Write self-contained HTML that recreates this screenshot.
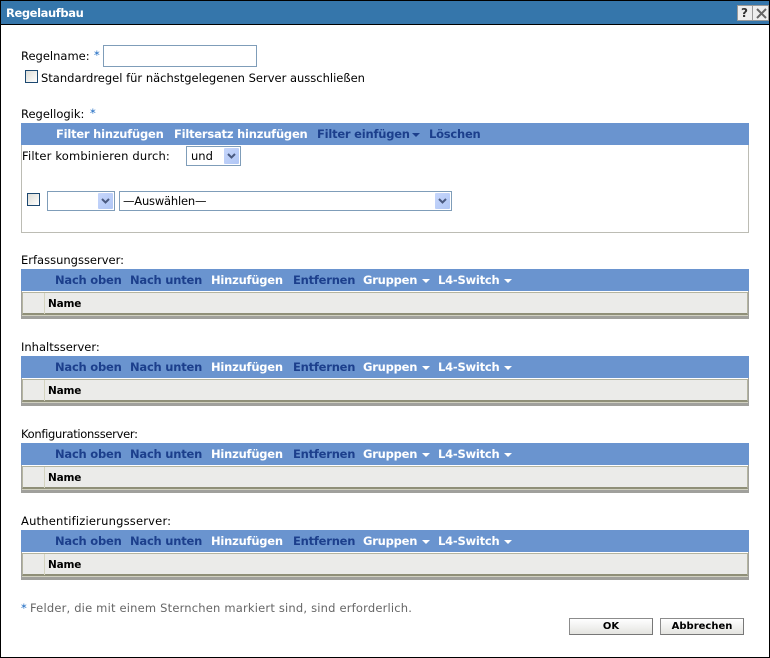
<!DOCTYPE html>
<html lang="de">
<head>
<meta charset="utf-8">
<title>Regelaufbau</title>
<style>
html,body{margin:0;padding:0;background:#fff}
#p{position:relative;width:770px;height:658px;overflow:hidden;background:#fff;font-family:"DejaVu Sans","Liberation Sans",sans-serif;font-size:11.5px;color:#000}
#p div,#p span.t{position:absolute;box-sizing:border-box}
.t{white-space:nowrap;line-height:14px}
.b{font-weight:bold;font-size:11.5px;letter-spacing:-.22px}
.w{color:#fff}
.n{color:#1c3f8c}
.s{color:#1565c0}
.tb{background:#6a94cf;height:22px;left:21px;width:728px}
.inp{background:#fff;border:1px solid #7f9db9}
.cb{width:13px;height:13px;border:1px solid #1c4870;background:linear-gradient(135deg,#dcdcd6,#fff)}
.arr{width:15px;height:16px;background:linear-gradient(135deg,#c6d6fb,#b0c6f5);border-radius:1px}
.bt{background:linear-gradient(#fff,#e4e4e0);border:1px solid #8c8c8c;border-right-color:#777;border-bottom-color:#777;height:17px;text-align:center;font-weight:bold;font-size:10px;line-height:15px}
.o{left:21px;width:728px;height:28px;background:#a0a09c}
.l{left:22px;width:726px;height:1px;background:#fff}
.h{left:22px;width:726px;height:23px;background:#ebebe9;border:1px solid #b4b4a0;border-bottom:2px solid #8f8f78;box-shadow:0 1px 0 #d0d0c0}
.c{left:44px;width:1px;height:21px;background:#d4d4c0}
.nm{font-weight:bold;font-size:10.500px;letter-spacing:-.2px}
svg{position:absolute}
</style>
</head>
<body>
<div id="p">
<div style="left:0;top:0;width:770px;height:658px;border:1px solid #000"></div>
<div style="left:1px;top:1px;width:768px;height:23px;background:#3576ab"></div>
<div style="left:1px;top:24px;width:768px;height:1px;background:#000"></div>
<span class="t w" style="left:6px;top:6px;font-weight:bold;font-size:11.5px;letter-spacing:-.4px">Regelaufbau</span>
<div style="left:737px;top:5px;width:32px;height:16px;background:#eee;border:1px solid #999"></div>
<div style="left:752px;top:5px;width:1px;height:16px;background:#999"></div>
<span class="t" style="left:741px;top:6px;font-weight:bold;font-size:12px;color:#333">?</span>
<svg style="left:756px;top:8px" width="11" height="11" viewBox="0 0 11 11"><path d="M1 1L10 10M10 1L1 10" stroke="#666" stroke-width="2"/></svg>

<span class="t" style="left:21px;top:49px">Regelname:</span>
<span class="t s" style="left:94px;top:48px">*</span>
<div class="inp" style="left:103px;top:45px;width:154px;height:22px"></div>
<div class="cb" style="left:25px;top:70px"></div>
<span class="t" style="left:41px;top:71px">Standardregel für nächstgelegenen Server ausschließen</span>

<span class="t" style="left:21px;top:107px">Regellogik:</span>
<span class="t s" style="left:90px;top:106px">*</span>
<div style="left:21px;top:123px;width:728px;height:110px;border:1px solid #bcbcb4;border-top:0"></div>
<div class="tb" style="top:123px"></div>
<span class="t b w" style="left:56px;top:127px">Filter hinzufügen</span>
<span class="t b w" style="left:174px;top:127px">Filtersatz hinzufügen</span>
<span class="t b n" style="left:317px;top:127px">Filter einfügen</span>
<svg style="left:412px;top:133px" width="8" height="4"><path d="M0 0H8L4 4Z" fill="#1c3f8c"/></svg>
<span class="t b n" style="left:429px;top:127px">Löschen</span>

<span class="t" style="left:22px;top:149px;letter-spacing:.17px">Filter kombinieren durch:</span>
<div class="inp" style="left:186px;top:146px;width:55px;height:20px"></div>
<span class="t" style="left:191px;top:149px">und</span>
<div class="arr" style="left:224px;top:148px"></div>
<svg style="left:227px;top:153px" width="9" height="6"><path d="M1 1L4.500 4.500L8 1" fill="none" stroke="#4a5a80" stroke-width="2"/></svg>

<div class="cb" style="left:27px;top:193px"></div>
<div class="inp" style="left:47px;top:191px;width:68px;height:20px"></div>
<div class="arr" style="left:98px;top:193px"></div>
<svg style="left:101px;top:198px" width="9" height="6"><path d="M1 1L4.500 4.500L8 1" fill="none" stroke="#4a5a80" stroke-width="2"/></svg>
<div class="inp" style="left:119px;top:191px;width:333px;height:20px"></div>
<span class="t" style="left:123px;top:194px;letter-spacing:-.2px">—Auswählen—</span>
<div class="arr" style="left:435px;top:193px"></div>
<svg style="left:438px;top:198px" width="9" height="6"><path d="M1 1L4.500 4.500L8 1" fill="none" stroke="#4a5a80" stroke-width="2"/></svg>

<!-- Erfassungsserver -->
<span class="t" style="left:21px;top:253px">Erfassungsserver:</span>
<div class="tb" style="top:269px"></div>
<span class="t b n" style="left:55px;top:273px">Nach oben</span>
<span class="t b n" style="left:130px;top:273px">Nach unten</span>
<span class="t b w" style="left:211px;top:273px">Hinzufügen</span>
<span class="t b n" style="left:293px;top:273px">Entfernen</span>
<span class="t b w" style="left:363px;top:273px">Gruppen</span>
<svg style="left:422px;top:279px" width="8" height="4"><path d="M0 0H8L4 4Z" fill="#fff"/></svg>
<span class="t b w" style="left:438px;top:273px">L4-Switch</span>
<svg style="left:504px;top:279px" width="8" height="4"><path d="M0 0H8L4 4Z" fill="#fff"/></svg>
<div class="o" style="top:291px"></div>
<div class="l" style="top:291px"></div>
<div class="h" style="top:292px"></div>
<div class="c" style="top:293px"></div>
<span class="t nm" style="left:48px;top:297px">Name</span>

<!-- Inhaltsserver -->
<span class="t" style="left:21px;top:340px">Inhaltsserver:</span>
<div class="tb" style="top:356px"></div>
<span class="t b n" style="left:55px;top:360px">Nach oben</span>
<span class="t b n" style="left:130px;top:360px">Nach unten</span>
<span class="t b w" style="left:211px;top:360px">Hinzufügen</span>
<span class="t b n" style="left:293px;top:360px">Entfernen</span>
<span class="t b w" style="left:363px;top:360px">Gruppen</span>
<svg style="left:422px;top:366px" width="8" height="4"><path d="M0 0H8L4 4Z" fill="#fff"/></svg>
<span class="t b w" style="left:438px;top:360px">L4-Switch</span>
<svg style="left:504px;top:366px" width="8" height="4"><path d="M0 0H8L4 4Z" fill="#fff"/></svg>
<div class="o" style="top:378px"></div>
<div class="l" style="top:378px"></div>
<div class="h" style="top:379px"></div>
<div class="c" style="top:380px"></div>
<span class="t nm" style="left:48px;top:384px">Name</span>

<!-- Konfigurationsserver -->
<span class="t" style="left:21px;top:427px;letter-spacing:-.3px">Konfigurationsserver:</span>
<div class="tb" style="top:443px"></div>
<span class="t b n" style="left:55px;top:447px">Nach oben</span>
<span class="t b n" style="left:130px;top:447px">Nach unten</span>
<span class="t b w" style="left:211px;top:447px">Hinzufügen</span>
<span class="t b n" style="left:293px;top:447px">Entfernen</span>
<span class="t b w" style="left:363px;top:447px">Gruppen</span>
<svg style="left:422px;top:453px" width="8" height="4"><path d="M0 0H8L4 4Z" fill="#fff"/></svg>
<span class="t b w" style="left:438px;top:447px">L4-Switch</span>
<svg style="left:504px;top:453px" width="8" height="4"><path d="M0 0H8L4 4Z" fill="#fff"/></svg>
<div class="o" style="top:465px"></div>
<div class="l" style="top:465px"></div>
<div class="h" style="top:466px"></div>
<div class="c" style="top:467px"></div>
<span class="t nm" style="left:48px;top:471px">Name</span>

<!-- Authentifizierungsserver -->
<span class="t" style="left:21px;top:514px;letter-spacing:.2px">Authentifizierungsserver:</span>
<div class="tb" style="top:530px"></div>
<span class="t b n" style="left:55px;top:534px">Nach oben</span>
<span class="t b n" style="left:130px;top:534px">Nach unten</span>
<span class="t b w" style="left:211px;top:534px">Hinzufügen</span>
<span class="t b n" style="left:293px;top:534px">Entfernen</span>
<span class="t b w" style="left:363px;top:534px">Gruppen</span>
<svg style="left:422px;top:540px" width="8" height="4"><path d="M0 0H8L4 4Z" fill="#fff"/></svg>
<span class="t b w" style="left:438px;top:534px">L4-Switch</span>
<svg style="left:504px;top:540px" width="8" height="4"><path d="M0 0H8L4 4Z" fill="#fff"/></svg>
<div class="o" style="top:552px"></div>
<div class="l" style="top:552px"></div>
<div class="h" style="top:553px"></div>
<div class="c" style="top:554px"></div>
<span class="t nm" style="left:48px;top:558px">Name</span>

<span class="t s" style="left:21px;top:601px">*</span>
<span class="t" style="left:30px;top:601px;color:#666;letter-spacing:.19px">Felder, die mit einem Sternchen markiert sind, sind erforderlich.</span>
<div class="bt" style="left:569px;top:618px;width:84px">OK</div>
<div class="bt" style="left:660px;top:618px;width:84px">Abbrechen</div>
</div>
</body>
</html>
